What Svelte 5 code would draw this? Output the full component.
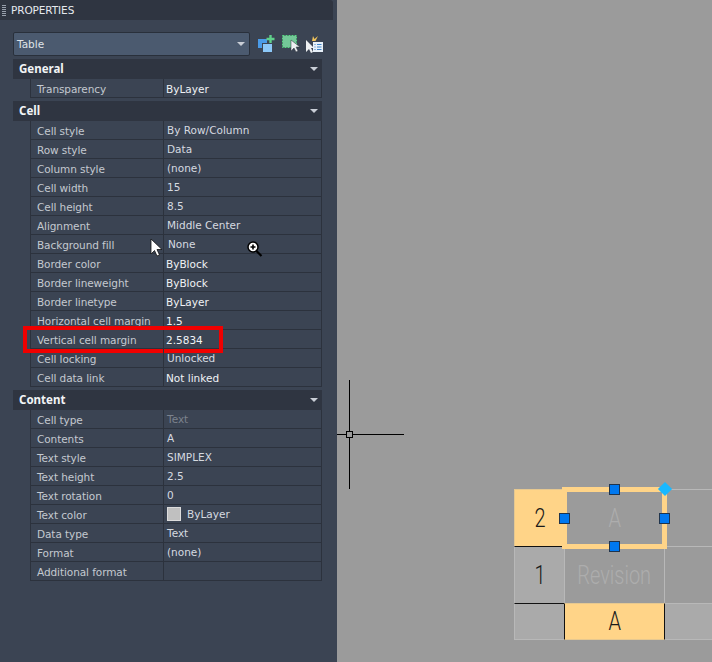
<script>
	const sections = [
		{
			title: 'General',
			rows: [{ label: 'Transparency', value: 'ByLayer' }]
		},
		{
			title: 'Cell',
			rows: [
				{ label: 'Cell style', value: 'By Row/Column', thin: true },
				{ label: 'Row style', value: 'Data', thin: true },
				{ label: 'Column style', value: '(none)', thin: true },
				{ label: 'Cell width', value: '15', thin: true },
				{ label: 'Cell height', value: '8.5', thin: true },
				{ label: 'Alignment', value: 'Middle Center', thin: true },
				{ label: 'Background fill', value: 'None', thin: true, nudge: true },
				{ label: 'Border color', value: 'ByBlock' },
				{ label: 'Border lineweight', value: 'ByBlock' },
				{ label: 'Border linetype', value: 'ByLayer' },
				{ label: 'Horizontal cell margin', value: '1.5' },
				{ label: 'Vertical cell margin', value: '2.5834', marked: true },
				{ label: 'Cell locking', value: 'Unlocked', thin: true },
				{ label: 'Cell data link', value: 'Not linked' }
			]
		},
		{
			title: 'Content',
			rows: [
				{ label: 'Cell type', value: 'Text', muted: true },
				{ label: 'Contents', value: 'A', thin: true },
				{ label: 'Text style', value: 'SIMPLEX', thin: true },
				{ label: 'Text height', value: '2.5', thin: true },
				{ label: 'Text rotation', value: '0', thin: true },
				{ label: 'Text color', value: 'ByLayer', swatch: true, thin: true },
				{ label: 'Data type', value: 'Text', thin: true },
				{ label: 'Format', value: '(none)', thin: true },
				{ label: 'Additional format', value: '' }
			]
		}
	];
</script>

<div class="page">
	<aside class="panel">
		<header class="title-bar">
			<span class="grip"></span>
			<span class="title">PROPERTIES</span>
		</header>

		<div class="toolbar">
			<div class="select">
				<span>Table</span>
				<i class="arrow"></i>
			</div>
			<svg class="tool" viewBox="0 0 18 18" width="18" height="18">
				<rect x="0" y="4" width="9" height="9" fill="#4a9be8" />
				<rect x="4.500" y="8.500" width="10" height="9" fill="#8cc8f8" stroke="#3b4453" stroke-width="1" />
				<path d="M12.500 0v8M8.500 4h8" stroke="#5fd08a" stroke-width="2.400" fill="none" />
			</svg>
			<svg class="tool" viewBox="0 0 18 18" width="18" height="18">
				<rect x="1" y="1" width="13" height="11" fill="#73c898" />
				<rect x="0.500" y="0.500" width="14" height="12" fill="none" stroke="#59d884" stroke-dasharray="2 1" />
				<path d="M9 5v11l3-3 2 4 2-1-2-4h4z" fill="#eef0f2" stroke="#2b303a" stroke-width="0.500" />
			</svg>
			<svg class="tool" viewBox="0 0 18 18" width="18" height="18">
				<path d="M0 5v12l3-3 2 4 2-1-2-4h3z" fill="#eef0f2" />
				<path d="M7 1l1.500 3L12 1 9.500 6H6z" fill="#f0c35a" />
				<rect x="7" y="7" width="10" height="10" fill="#e8f0f8" />
				<path d="M8.500 9.500h1M11 9.500h4.500M8.500 12h1M11 12h4.500M8.500 14.500h1M11 14.500h4.500" stroke="#3d83c8" stroke-width="1" />
			</svg>
		</div>

		{#each sections as section}
			<section class="section">
				<h2 class="section-head">
					<span class="section-title">{section.title}</span>
					<i class="arrow"></i>
				</h2>
				<div class="rows">
					{#each section.rows as row}
						<div class="row">
							<div class="label">{row.label}</div>
							<div class="value" class:thin={row.thin} class:muted={row.muted} class:nudge={row.nudge}>
								{#if row.swatch}<i class="swatch"></i>{/if}
								{row.value}
							</div>
							{#if row.marked}<div class="marker"></div>{/if}
						</div>
					{/each}
				</div>
			</section>
		{/each}

		<svg class="pointer" viewBox="0 0 13 19" width="13" height="19">
			<path d="M1 1v15l3.500-3.500 2.500 5.500 2.500-1-2.500-5.500h5z" fill="#fff" stroke="#111" stroke-width="0.800" />
		</svg>
		<svg class="zoom-cursor" viewBox="0 0 16 18" width="16" height="18">
			<circle cx="6" cy="6" r="5" fill="#fff" stroke="#000" stroke-width="1.500" />
			<path d="M6 3.500v5M3.500 6h5" stroke="#000" stroke-width="1.600" />
			<path d="M9.500 10l5 5" stroke="#000" stroke-width="2.200" />
		</svg>
	</aside>

	<main class="canvas">
		<div class="crosshair">
			<span class="cross-h"></span>
			<span class="cross-v"></span>
			<span class="pickbox"></span>
		</div>

		<div class="drawing">
			<div class="cell hot num"><span>2</span></div>
			<div class="cell ghost"><span>A</span></div>
			<div class="cell"></div>
			<div class="cell light num black-top"><span>1</span></div>
			<div class="cell ghost"><span>Revision</span></div>
			<div class="cell"></div>
			<div class="cell light black-top"></div>
			<div class="cell hot num black-sides"><span>A</span></div>
			<div class="cell light"></div>

			<div class="selection"></div>
			<i class="handle" style="left:95px;top:-5px"></i>
			<i class="handle" style="left:45px;top:24px"></i>
			<i class="handle" style="left:145px;top:24px"></i>
			<i class="handle" style="left:95px;top:52px"></i>
			<i class="diamond"></i>
		</div>
	</main>
</div>

<style>
	:global(body) {
		margin: 0;
		background: #9b9b9b;
	}

	.page {
		display: flex;
		width: 712px;
		height: 662px;
		overflow: hidden;
		font-family: 'DejaVu Sans', sans-serif;
		font-size: 10.500px;
	}

	.panel {
		position: relative;
		width: 337px;
		flex-shrink: 0;
		background: #3b4453;
		color: #d6dae0;
	}

	.title-bar {
		display: flex;
		align-items: center;
		gap: 5px;
		height: 20px;
		width: 333px;
		padding-left: 2px;
		box-sizing: border-box;
		background: #2f3541;
		border-top-right-radius: 3px;
		color: #e6e9ee;
	}

	.grip {
		width: 4px;
		height: 12px;
		margin-top: 2px;
		background: repeating-linear-gradient(#98a0ac 0 1px, transparent 1px 2px);
	}

	.title {
		letter-spacing: -0.100px;
	}

	.toolbar {
		display: flex;
		align-items: center;
		gap: 6px;
		height: 24px;
		margin: 12px 0 3px 13px;
	}

	.select {
		display: flex;
		align-items: center;
		justify-content: space-between;
		box-sizing: border-box;
		width: 237px;
		height: 24px;
		margin-right: 2px;
		padding: 0 4px 0 3px;
		background: #4b5a6f;
		border: 1px solid #29303b;
		border-radius: 2px;
		color: #dfe3e8;
	}

	.arrow {
		width: 0;
		height: 0;
		border-left: 4px solid transparent;
		border-right: 4px solid transparent;
		border-top: 4px solid #c9ced6;
	}

	.section {
		width: 309px;
		margin: 0 0 3px 13px;
	}

	.section-head {
		display: flex;
		align-items: center;
		justify-content: space-between;
		height: 20px;
		margin: 0;
		padding: 0 4px 0 6px;
		background: #2f3541;
		color: #f2f4f6;
		font-family: 'Noto Sans', sans-serif;
		font-size: 11.500px;
		font-weight: 700;
	}

	.section-title {
		margin-top: -2px;
	}

	.rows {
		margin-left: 17px;
		border-left: 1px solid #2c323d;
		border-right: 1px solid #2c323d;
	}

	.row {
		position: relative;
		display: grid;
		grid-template-columns: 133px 1fr;
		height: 19px;
		box-sizing: border-box;
		border-bottom: 1px solid #2c323d;
		line-height: 20px;
	}

	.label {
		padding-left: 6px;
		border-right: 1px solid #2c323d;
		color: #c4c9d0;
		letter-spacing: -0.080px;
		white-space: nowrap;
		overflow: hidden;
	}

	.value {
		display: flex;
		align-items: center;
		gap: 6px;
		height: 18px;
		padding-left: 2px;
		margin-top: 1px;
		color: #f0f2f5;
		font-weight: 500;
	}

	.value.thin {
		padding-left: 3px;
		margin-top: 0;
		color: #d6dae0;
	}

	.value.nudge {
		padding-left: 4px;
	}

	.value.muted {
		margin-top: 0;
		padding-left: 3px;
		color: #7b828d;
	}

	.swatch {
		width: 14px;
		height: 14px;
		background: #c0c0c0;
		border: 1px solid #dcdcdc;
		box-sizing: border-box;
	}

	.marker {
		position: absolute;
		left: -8px;
		top: -4px;
		width: 200px;
		height: 27px;
		box-sizing: border-box;
		border: 4px solid #f00000;
	}

	.pointer {
		position: absolute;
		left: 150px;
		top: 238px;
	}

	.zoom-cursor {
		position: absolute;
		left: 247px;
		top: 241px;
	}

	.canvas {
		position: relative;
		flex: 1;
		background: #9b9b9b;
		overflow: hidden;
	}

	.crosshair span {
		position: absolute;
		background: #000;
	}

	.cross-h {
		left: 0;
		top: 434px;
		width: 67px;
		height: 1px;
	}

	.cross-v {
		left: 12px;
		top: 380px;
		width: 1px;
		height: 109px;
	}

	.crosshair .pickbox {
		left: 9px;
		top: 431px;
		width: 7px;
		height: 7px;
		box-sizing: border-box;
		background: #9b9b9b;
		border: 1px solid #000;
	}

	.drawing {
		position: absolute;
		left: 177px;
		top: 489px;
		display: grid;
		grid-template-columns: 50px 100px 60px;
		grid-template-rows: 57px 57px 36px;
	}

	.cell {
		display: flex;
		align-items: center;
		justify-content: center;
		box-sizing: border-box;
		border: 1px solid #b8b8b8;
		margin: 0 -1px -1px 0;
		font-family: 'Roboto', sans-serif;
		font-weight: 300;
		font-size: 25px;
		color: #8e8e8e;
	}

	.cell span {
		transform: scaleX(0.8);
	}

	.num {
		color: #1a1a1a;
	}

	.hot {
		background: #ffd488;
		border-color: #e6c890;
	}

	.light {
		background: #aaaaaa;
	}

	.ghost span {
		color: #adadad;
	}

	.black-top {
		border-top: 1px solid #111;
	}

	.light.black-top:not(.num) {
		border-right: 1px solid #111;
	}

	.black-sides {
		border-left: 1px solid #111;
		border-right: 1px solid #111;
		position: relative;
		z-index: 1;
	}

	.selection {
		position: absolute;
		z-index: 2;
		left: 48px;
		top: -2px;
		width: 105px;
		height: 62px;
		box-sizing: border-box;
		border: 5px solid #ffd488;
	}

	.handle {
		position: absolute;
		z-index: 3;
		width: 11px;
		height: 11px;
		box-sizing: border-box;
		background: #0078f0;
		border: 1px solid #20344c;
	}

	.diamond {
		position: absolute;
		z-index: 3;
		left: 146px;
		top: -5px;
		width: 10px;
		height: 10px;
		background: #19b8ff;
		transform: rotate(45deg);
	}
</style>
